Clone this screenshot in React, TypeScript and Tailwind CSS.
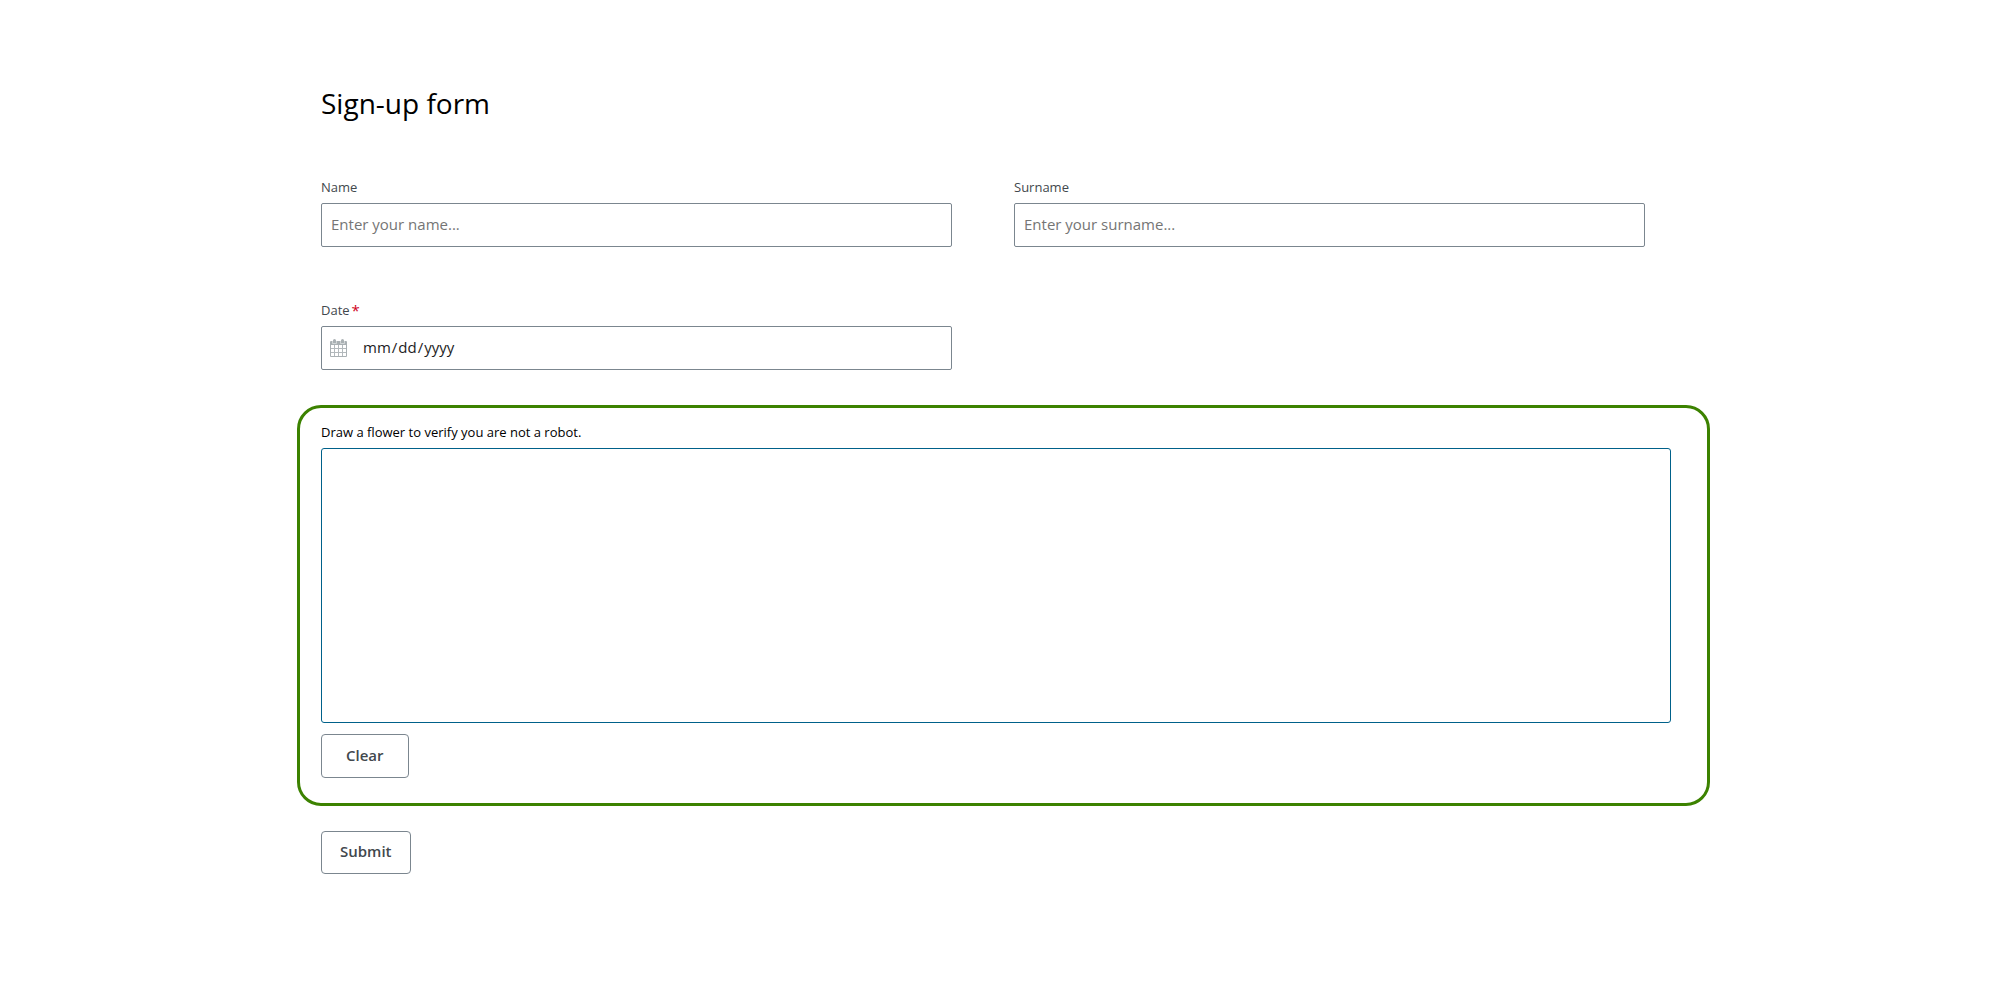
import { useRef } from 'react';
import type { InputHTMLAttributes, PointerEvent, ReactNode } from 'react';

const inputStyles =
  "block h-11 w-full rounded-[2px] border border-[#7b868f] bg-white pr-[9px] pb-[2px] text-[15px] placeholder:text-[#757575] placeholder:opacity-100 focus:outline-2 focus:outline-[#1b6b91]";

const buttonStyles =
  'block rounded-[4px] border border-[#7b868f] pb-[2px] text-[15px] font-semibold text-[#42484d]';

function CalendarIcon() {
  return (
    <svg
      className="pointer-events-none absolute top-[13px] left-[9px] h-[18px] w-[17px]"
      viewBox="0 0 17 18"
      fill="none"
      aria-hidden="true"
    >
      <path
        fill="#a9b0b3"
        fillRule="evenodd"
        d="M1 2h2v-.5a1.5 1.5 0 0 1 3 0V2h5v-.5a1.5 1.5 0 0 1 3 0V2h2a1 1 0 0 1 1 1v14a1 1 0 0 1-1 1H1a1 1 0 0 1-1-1V3a1 1 0 0 1 1-1zM1 6v11h15V6z"
      />
      <path d="M4.5 6v11M8.5 6v11M12.5 6v11M1 9.5h15M1 13.5h15" stroke="#b3b9bc" />
      <path d="M2.5 2v2.5h4V2M10.5 2v2.5h4V2" stroke="#e3e6e7" strokeWidth="0.7" />
    </svg>
  );
}

interface FieldProps extends InputHTMLAttributes<HTMLInputElement> {
  id: string;
  label: string;
  icon?: ReactNode;
}

function Field({ id, label, icon, required, className = '', ...props }: FieldProps) {
  return (
    <div>
      <label htmlFor={id} className="mb-[6px] flex gap-[2px] text-[13px] leading-5 text-[#42484d]">
        {label}
        {required && <span className="text-[15px] text-[#d0021b]">*</span>}
      </label>
      <div className="relative">
        {icon}
        <input
          id={id}
          name={id}
          required={required}
          className={`${inputStyles} ${icon ? 'pl-10' : 'pl-[9px]'} ${className}`}
          {...props}
        />
      </div>
    </div>
  );
}

function DrawingPad() {
  const canvasRef = useRef<HTMLCanvasElement>(null);
  const drawing = useRef(false);

  const getPoint = (e: PointerEvent<HTMLCanvasElement>) => {
    const canvas = e.currentTarget;
    const rect = canvas.getBoundingClientRect();
    return {
      x: ((e.clientX - rect.left) * canvas.width) / rect.width,
      y: ((e.clientY - rect.top) * canvas.height) / rect.height,
    };
  };

  const handleDown = (e: PointerEvent<HTMLCanvasElement>) => {
    const ctx = e.currentTarget.getContext('2d');
    if (!ctx) return;
    const { x, y } = getPoint(e);
    drawing.current = true;
    ctx.beginPath();
    ctx.moveTo(x, y);
  };

  const handleMove = (e: PointerEvent<HTMLCanvasElement>) => {
    const ctx = e.currentTarget.getContext('2d');
    if (!drawing.current || !ctx) return;
    const { x, y } = getPoint(e);
    ctx.lineWidth = 2;
    ctx.lineTo(x, y);
    ctx.stroke();
  };

  const stopDrawing = () => {
    drawing.current = false;
  };

  const handleClear = () => {
    const canvas = canvasRef.current;
    canvas?.getContext('2d')?.clearRect(0, 0, canvas.width, canvas.height);
  };

  return (
    <div className="mt-[35px] -mr-[39px] -ml-6 rounded-[24px] border-[3px] border-[#3c8200] pt-[14px] pr-9 pb-[25px] pl-[21px]">
      <p id="drawing-label" className="mb-[6px] text-[13px] leading-5 text-black">
        Draw a flower to verify you are not a robot.
      </p>
      <canvas
        ref={canvasRef}
        width={1348}
        height={273}
        role="img"
        aria-labelledby="drawing-label"
        className="block h-[275px] w-full touch-none rounded-[3px] border border-[#00618a]"
        onPointerDown={handleDown}
        onPointerMove={handleMove}
        onPointerUp={stopDrawing}
        onPointerLeave={stopDrawing}
      />
      <button type="button" onClick={handleClear} className={`${buttonStyles} mt-[11px] h-11 px-6`}>
        Clear
      </button>
    </div>
  );
}

export default function App() {
  return (
    <main className="min-h-screen bg-white px-12 pt-[83px] pb-12 font-['Open_Sans',sans-serif]">
      <form className="mx-auto max-w-[1350px]" onSubmit={(e) => e.preventDefault()}>
        <h1 className="text-[28px] leading-10 text-black">Sign-up form</h1>

        <div className="mt-[54px] grid grid-cols-1 gap-x-[62px] gap-y-[53px] md:grid-cols-2 md:pr-[26px]">
          <Field id="name" label="Name" type="text" placeholder="Enter your name..." />
          <Field id="surname" label="Surname" type="text" placeholder="Enter your surname..." />
          <Field
            id="date"
            label="Date"
            type="date"
            required
            icon={<CalendarIcon />}
            className="text-[#1d1d1d] [&::-webkit-calendar-picker-indicator]:opacity-0"
          />
        </div>

        <DrawingPad />

        <button type="submit" className={`${buttonStyles} mt-[25px] h-[43px] px-[18px]`}>
          Submit
        </button>
      </form>
    </main>
  );
}
